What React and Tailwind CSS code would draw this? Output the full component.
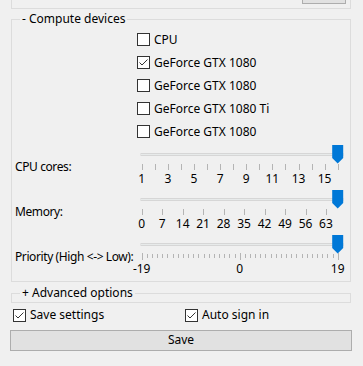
import React from 'react'

const font = { fontFamily: '"Noto Sans", "Open Sans", sans-serif' }

const Check = ({ checked, label }) => (
  <label className="flex items-center gap-[4px] text-[12px] leading-[16px] text-black whitespace-nowrap">
    <span className="w-[13px] h-[13px] border border-[#333333] bg-white flex items-center justify-center shrink-0">
      {checked && (
        <svg width="11" height="11" viewBox="0 0 11 11">
          <polyline points="1.5,5.5 4,8 9.5,2.5" fill="none" stroke="#333" strokeWidth="1" />
        </svg>
      )}
    </span>
    <span>{label}</span>
  </label>
)

// trackbar: width 210, track starts at x=4
const Slider = ({ label, min, max, value, labels, minor, major }) => {
  const x0 = 4.7
  const x1 = 200.7
  const pos = (v) => x0 + ((v - min) / (max - min)) * (x1 - x0)
  const tx = pos(value)
  return (
    <div className="flex h-[45px]">
      <div className="w-[125px] pl-[3px] pt-[14px] text-[12px] leading-[16px] whitespace-nowrap tracking-[-0.4px]">{label}</div>
      <div className="relative w-[210px] h-[45px]">
        <svg width="210" height="45" className="absolute left-0 top-0">
          <rect x="4" y="8.5" width="202" height="2" fill="#e7eaea" stroke="#d6d6d6" />
          {minor.map((v) => (
            <line key={'m' + v} x1={Math.round(pos(v)) + 0.5} x2={Math.round(pos(v)) + 0.5} y1="19" y2={major ? 23 : 25} stroke="#b4b4b4" />
          ))}
          {(major || []).map((v) => (
            <line key={'M' + v} x1={Math.round(pos(v)) + 0.5} x2={Math.round(pos(v)) + 0.5} y1="18" y2="25" stroke="#b4b4b4" />
          ))}
          <path d={`M${tx - 5.5} 0 H${tx + 5.5} V13 L${tx} 18.5 L${tx - 5.5} 13 Z`} fill="#0078d7" />
        </svg>
        {labels.map((v) => (
          <span
            key={v}
            className="absolute top-[26px] text-[12px] leading-[16px] -translate-x-1/2"
            style={{ left: pos(v) }}
          >
            {v}
          </span>
        ))}
      </div>
    </div>
  )
}

export default function App() {
  const cpuTicks = Array.from({ length: 16 }, (_, i) => i + 1)
  const memTicks = Array.from({ length: 10 }, (_, i) => i * 7)
  const prioTicks = Array.from({ length: 39 }, (_, i) => i - 19)

  return (
    <div className="w-[363px] h-[366px] bg-[#f0f0f0] text-black overflow-hidden" style={font}>
      <div className="ml-[11px] w-[340px] h-[9px] border-x border-b border-[#dcdcdc] flex justify-end">
        <div className="w-[44px] h-[4px] mr-[4px] border-x border-b border-[#adadad] bg-[#e1e1e1]" />
      </div>

      <fieldset className="mt-[2px] ml-[11px] w-[340px] border border-[#dcdcdc] pb-[1px]">
        <legend className="ml-[8px] px-[2px] text-[12px] leading-[16px]">- Compute devices</legend>
        <div className="pl-[125px] pt-[1px] flex flex-col">
          {[
            ['CPU', false],
            ['GeForce GTX 1080', true],
            ['GeForce GTX 1080', false],
            ['GeForce GTX 1080 Ti', false],
            ['GeForce GTX 1080', false],
          ].map(([l, c], i) => (
            <div key={i} className="h-[23px] flex items-center">
              <Check label={l} checked={c} />
            </div>
          ))}
        </div>
        <div className="mt-[2px]">
          <Slider label="CPU cores:" min={1} max={16} value={16} minor={cpuTicks} labels={[1, 3, 5, 7, 9, 11, 13, 15]} />
          <Slider label="Memory:" min={0} max={67} value={67} minor={memTicks} labels={memTicks} />
          <Slider label="Priority (High <-> Low):" min={-19} max={19} value={19} minor={prioTicks} major={[-19, 0, 19]} labels={[-19, 0, 19]} />
        </div>
      </fieldset>

      <fieldset className="mt-[3px] ml-[11px] w-[340px] border border-[#dcdcdc] h-[18px]">
        <legend className="ml-[8px] px-[2px] text-[12px] leading-[16px]">+ Advanced options</legend>
      </fieldset>

      <div className="flex h-[22px] items-center pl-[13px] mt-[1px]">
        <div className="w-[172px]">
          <Check label="Save settings" checked />
        </div>
        <Check label="Auto sign in" checked />
      </div>

      <div className="pl-[10px]">
        <button className="w-[342px] h-[21px] border border-[#adadad] bg-[#e1e1e1] text-[12px] leading-[16px]">Save</button>
      </div>
    </div>
  )
}
